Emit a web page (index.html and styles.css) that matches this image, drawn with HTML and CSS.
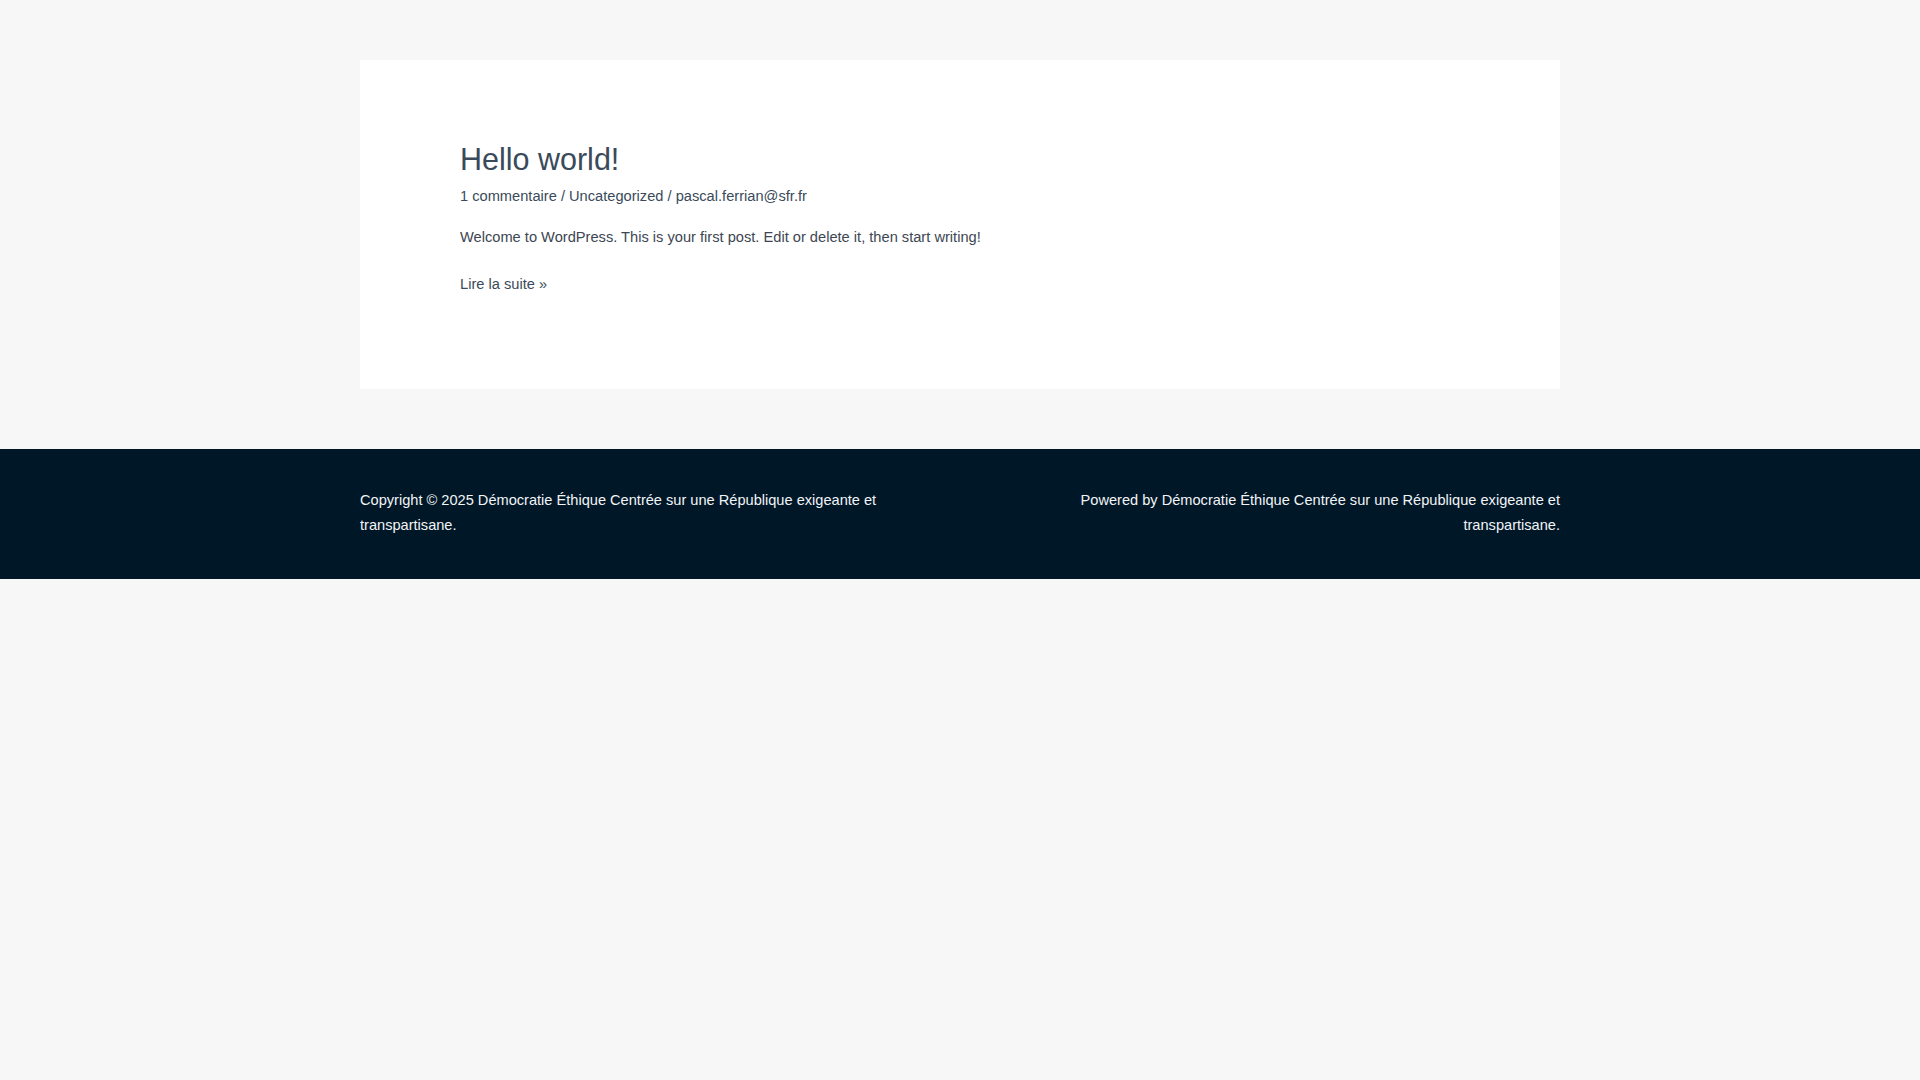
FILE: index.html
```html
<!DOCTYPE html>
<html lang="fr">
<head>
<meta charset="utf-8">
<title>Démocratie Éthique Centrée sur une République exigeante et transpartisane</title>
<link rel="stylesheet" href="styles.css">
</head>
<body>
<div class="site">
  <main class="content">
    <article class="post">
      <h2 class="entry-title"><a href="#">Hello world!</a></h2>
      <div class="entry-meta">
        <a href="#">1 commentaire</a> / <a href="#">Uncategorized</a> / <a href="#">pascal.ferrian@sfr.fr</a>
      </div>
      <div class="entry-content">
        <p>Welcome to WordPress. This is your first post. Edit or delete it, then start writing!</p>
        <p class="read-more"><a href="#">Lire la suite »</a></p>
      </div>
    </article>
  </main>
  <footer class="site-footer">
    <div class="footer-inner">
      <div class="footer-left">Copyright © 2025 Démocratie Éthique Centrée sur une République exigeante et transpartisane.</div>
      <div class="footer-right">Powered by Démocratie Éthique Centrée sur une République exigeante et transpartisane.</div>
    </div>
  </footer>
</div>
</body>
</html>
```
FILE: styles.css
```css
html, body {
  margin: 0;
  padding: 0;
}
body {
  background: #f7f7f7;
  font-family: "Liberation Sans", Arial, sans-serif;
  font-size: 14.65px;
  color: #3a4553;
}
a {
  color: inherit;
  text-decoration: none;
}
.content {
  width: 1200px;
  margin: 60px auto 60px;
}
.post {
  background: #ffffff;
  padding: 81px 100px 93px;
}
.entry-title {
  margin: 0;
  font-size: 30.5px;
  line-height: 36px;
  font-weight: 400;
  color: #3a4a5a;
}
.entry-meta {
  margin-top: 7px;
  font-size: 14.65px;
  line-height: 24px;
  color: #3a4a5a;
}
.entry-content p {
  margin: 17px 0 0;
  line-height: 24px;
  color: #3d4652;
}
.entry-content .read-more {
  margin-top: 23px;
  color: #3a4a5a;
}
.site-footer {
  background: #001728;
  color: #f2f4f6;
}
.footer-inner {
  width: 1200px;
  margin: 0 auto;
  padding: 39px 0 41px;
  display: grid;
  grid-template-columns: 1fr 1fr;
  column-gap: 80px;
  font-size: 14.6px;
  line-height: 25px;
}
.footer-right {
  text-align: right;
}
```
